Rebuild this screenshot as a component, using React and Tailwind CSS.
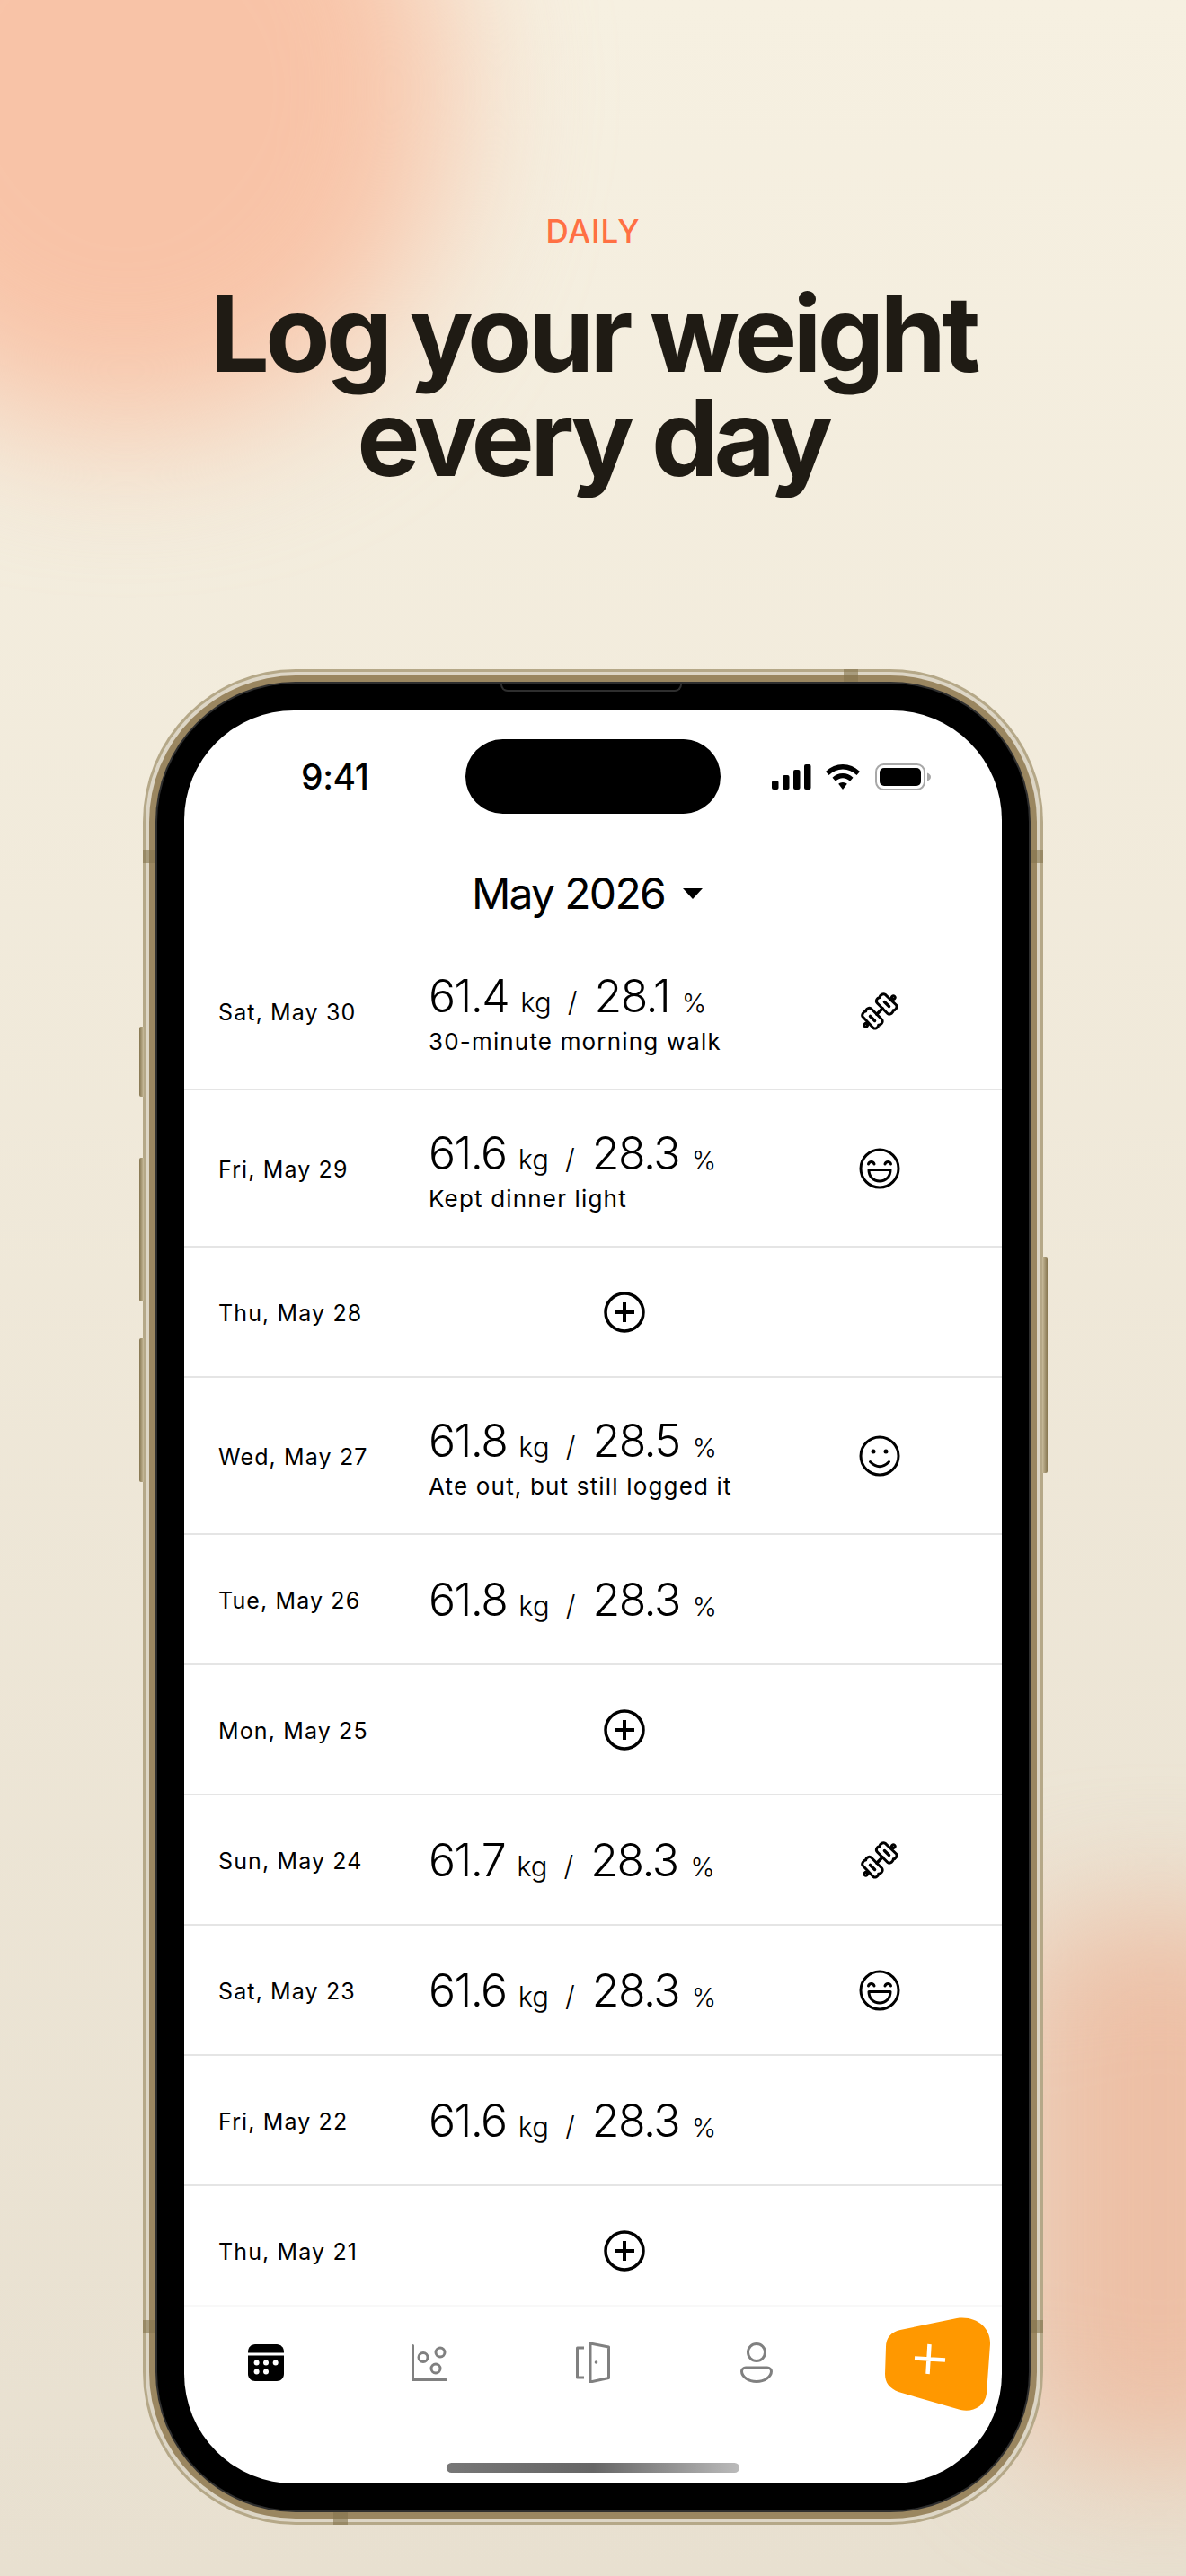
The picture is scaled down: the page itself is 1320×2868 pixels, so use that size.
const rows = [
  { date: 'Sat, May 30', kg: '61.4', pct: '28.1', note: '30-minute morning walk', icon: 'dumbbell' },
  { date: 'Fri, May 29', kg: '61.6', pct: '28.3', note: 'Kept dinner light', icon: 'laugh' },
  { date: 'Thu, May 28' },
  { date: 'Wed, May 27', kg: '61.8', pct: '28.5', note: 'Ate out, but still logged it', icon: 'smile' },
  { date: 'Tue, May 26', kg: '61.8', pct: '28.3' },
  { date: 'Mon, May 25' },
  { date: 'Sun, May 24', kg: '61.7', pct: '28.3', icon: 'dumbbell' },
  { date: 'Sat, May 23', kg: '61.6', pct: '28.3', icon: 'laugh' },
  { date: 'Fri, May 22', kg: '61.6', pct: '28.3' },
  { date: 'Thu, May 21' },
];

const DumbbellIcon = () => (
  <svg width="46" height="46" viewBox="-25.500 -25.500 51 51" fill="none" stroke="#000" strokeWidth="3.3" strokeLinecap="round" strokeLinejoin="round">
    <g transform="rotate(-45)">
      <path d="M-5 0H5" strokeWidth="3.8" />
      <path d="M5 -9C5 -13 10 -14 12 -12C14 -14 19 -13 19.500 -10L20 9C19.500 12 15 13 13 11C11 13 6 13 5 9Z" />
      <path d="M-5 -9C-5 -13 -10 -14 -12 -12C-14 -14 -19 -13 -19.500 -10L-20 9C-19.500 12 -15 13 -13 11C-11 13 -6 13 -5 9Z" />
      <path d="M12.500 -4V4M-12.500 -4V4" strokeWidth="3.8" />
      <circle cx="24" cy="0" r="2" />
      <circle cx="-24" cy="0" r="2" />
    </g>
  </svg>
);

const LaughIcon = () => (
  <svg width="46" height="46" viewBox="0 0 46 46" fill="none" stroke="#000" strokeWidth="3" strokeLinecap="round" strokeLinejoin="round">
    <circle cx="23" cy="23" r="21" />
    <path d="M10.500 18C11.500 14.500 16 14.500 17 18M29 18C30 14.500 34.500 14.500 35.500 18" />
    <path d="M11 24.500H35C35 32 30 37 23 37C16 37 11 32 11 24.500Z" />
  </svg>
);

const SmileIcon = () => (
  <svg width="46" height="46" viewBox="0 0 46 46" fill="none" stroke="#000" strokeWidth="3" strokeLinecap="round">
    <circle cx="23" cy="23" r="21" />
    <circle cx="16" cy="18" r="2.5" fill="#000" stroke="none" />
    <circle cx="30" cy="18" r="2.5" fill="#000" stroke="none" />
    <path d="M12.500 29.500Q23 40 33.500 29.500" />
  </svg>
);

const PlusCircle = () => (
  <svg width="46" height="46" viewBox="0 0 46 46" fill="none" stroke="#000" strokeWidth="3.5">
    <circle cx="23" cy="23" r="21" />
    <path d="M23 12V34M12 23H34" strokeWidth="4" />
  </svg>
);

const rowIcons = { dumbbell: DumbbellIcon, laugh: LaughIcon, smile: SmileIcon };

const LogRow = ({ item }) => {
  const Icon = rowIcons[item.icon];
  const tall = Boolean(item.note);
  return (
    <div className={`flex shrink-0 items-center border-b-2 border-[#e5e5e5] pl-[38px] ${tall ? 'h-[175px]' : 'h-[145px]'}`}>
      <div className="mt-[2px] w-[234px] text-[25px] leading-[32px] tracking-[0.045em] text-black">{item.date}</div>
      <div className="w-[436px]">
        {item.kg ? (
          <div className={`text-black ${tall ? 'pt-[6px]' : ''}`}>
            <div className="flex h-[56px] items-baseline whitespace-nowrap">
              <span className="text-[50px] font-[350] leading-[56px] tracking-[-0.03em]">{item.kg}</span>
              <span className="ml-[13px] text-[31px] font-[350] leading-none">kg</span>
              <span className="ml-[18px] text-[31px] font-[350] leading-none">/</span>
              <span className="ml-[19px] text-[50px] font-[350] leading-[56px] tracking-[-0.03em]">{item.pct}</span>
              <span className="ml-[14px] text-[29px] font-light leading-none">%</span>
            </div>
            {item.note && <div className="mt-[6px] text-[26px] leading-[34px] tracking-[0.045em]">{item.note}</div>}
          </div>
        ) : (
          <div className="flex justify-center">
            <PlusCircle />
          </div>
        )}
      </div>
      <div className="flex w-[132px] justify-center">{Icon && <Icon />}</div>
    </div>
  );
};

const StatusIcons = () => (
  <div className="ml-[57px] flex items-center">
    <svg width="44" height="28" viewBox="0 0 44 28" fill="#000">
      <rect x="0" y="18" width="7.5" height="10" rx="2" />
      <rect x="12" y="12" width="7.5" height="16" rx="2" />
      <rect x="24" y="6" width="7.5" height="22" rx="2" />
      <rect x="36" y="0" width="7.5" height="28" rx="2" />
    </svg>
    <svg className="ml-[16px]" width="38" height="28" viewBox="0 0 38 28" fill="#000">
      <path d="M19 0C26 0 32.500 2.800 38 8L34.500 12C30 7.800 25 5.500 19 5.500C13 5.500 8 7.800 3.500 12L0 8C5.500 2.800 12 0 19 0Z" />
      <path d="M19 10C23.500 10 27.500 11.800 30.500 14.800L27 18.700C24.800 16.500 22 15.300 19 15.300C16 15.300 13.200 16.500 11 18.700L7.500 14.800C10.500 11.800 14.500 10 19 10Z" />
      <path d="M19 20C21 20 22.500 20.700 23.800 21.800L19 28L14.200 21.800C15.500 20.700 17 20 19 20Z" />
    </svg>
    <svg className="ml-[17px]" width="62" height="30" viewBox="0 0 62 30">
      <rect x="1" y="1" width="54" height="28" rx="8.500" fill="none" stroke="#a8a8a8" strokeWidth="2" />
      <rect x="5" y="5" width="46" height="20" rx="5" fill="#000" />
      <path d="M58 10.500C60.500 11.500 62 13 62 15C62 17 60.500 18.500 58 19.500Z" fill="#a8a8a8" />
    </svg>
  </div>
);

const TabBar = () => (
  <div className="flex h-[199px] shrink-0 flex-col border-t-2 border-[#f8f8f8]">
    <div className="grid grid-cols-5 items-start pt-[42px]">
      <div className="flex justify-center">
        <svg width="40" height="41" viewBox="0 0 40 41">
          <path d="M8 0H32C36.500 0 40 3.500 40 8.500V9.500H0V8.500C0 3.500 3.500 0 8 0Z" fill="#000" />
          <path d="M0 12.500H40V33C40 37.500 36.500 41 32 41H8C3.500 41 0 37.500 0 33Z" fill="#000" />
          <g fill="#fff">
            <circle cx="9.600" cy="20.500" r="3" />
            <circle cx="20" cy="20.500" r="3" />
            <circle cx="30.700" cy="20.500" r="3" />
            <circle cx="9.600" cy="30.500" r="3" />
            <circle cx="20" cy="30.500" r="3" />
          </g>
        </svg>
      </div>
      <div className="flex justify-center">
        <svg width="40" height="41" viewBox="0 0 40 41" fill="none" stroke="#808080" strokeWidth="3" strokeLinecap="round" strokeLinejoin="round">
          <path d="M1.500 1.500V39.500H38.500" />
          <circle cx="13" cy="14.500" r="5" />
          <circle cx="32" cy="9" r="5" />
          <circle cx="27" cy="27" r="5" />
        </svg>
      </div>
      <div className="flex justify-center">
        <svg className="-mt-[2px]" width="38" height="45" viewBox="0 0 38 45" fill="none" stroke="#808080" strokeWidth="3" strokeLinejoin="round">
          <path d="M9 6H1.500V39H9" />
          <path d="M16 1L36.500 5V39.500L16 44Z" />
          <circle cx="22.500" cy="22" r="1.800" fill="#808080" stroke="none" />
        </svg>
      </div>
      <div className="flex justify-center">
        <svg className="-mt-[2px]" width="36" height="45" viewBox="0 0 36 45" fill="none" stroke="#808080" strokeWidth="3">
          <circle cx="18" cy="11" r="9.500" />
          <path d="M6 28H30C32.500 28 34.500 30 34.500 32C34.500 38 27 43.500 18 43.500C9 43.500 1.500 38 1.500 32C1.500 30 3.500 28 6 28Z" />
        </svg>
      </div>
      <div className="-mt-[30px] pl-[52px]">
        <svg width="118" height="104" viewBox="0 0 118 104">
          <path d="M17 14L80 1C102 -2 118 12 117 30L113 85C111 100 97 106 84 103L15 83C5 79 0 73 0 63L1 33C1 23 7 16 17 14Z" fill="#ff9800" />
          <path d="M33 45.500L67 47.500M49.500 30L47.500 63" stroke="#fff" strokeWidth="4.500" fill="none" />
        </svg>
      </div>
    </div>
    <div className="mx-auto mt-auto mb-[12px] h-[11px] w-[326px] rounded-full bg-gradient-to-r from-[#777] via-[#666] to-[#bbb]" />
  </div>
);

const PhoneEdge = ({ side }) => {
  const spots = {
    leftTop: 'left-0 top-[201px] h-[15px] w-[14px]',
    rightTop: 'right-0 top-[201px] h-[15px] w-[14px]',
    leftBottom: 'left-0 top-[1838px] h-[15px] w-[14px]',
    rightBottom: 'right-0 top-[1838px] h-[15px] w-[14px]',
    top: 'left-[780px] top-0 h-[14px] w-[16px]',
    bottom: 'left-[212px] bottom-0 h-[14px] w-[16px]',
  };
  return <div className={`absolute bg-[#85754f]/60 ${spots[side]}`} />;
};

const App = () => {
  return (
    <div className="relative h-[2868px] w-[1320px] overflow-hidden bg-gradient-to-b from-[#f6f0e1] to-[#e8e0d0] font-[Inter,sans-serif]">
      {/* soft colour blobs */}
      <div className="absolute -left-[220px] -top-[280px] h-[760px] w-[720px] rounded-full bg-[#f8c3a7] blur-[80px]" />
      <div className="absolute left-[1130px] top-[2130px] h-[610px] w-[320px] rounded-[100px] bg-[#edbfa5] blur-[70px]" />

      <div className="relative flex flex-col items-center pt-[237px]">
        <div className="text-[35px] font-medium leading-[40px] tracking-[0.025em] text-[#ff7043]">DAILY</div>
        <h1 className="mt-[36px] text-center text-[118px] font-bold leading-[116px] tracking-[-0.04em] text-[#1f1b14]">
          Log your weight
          <br />
          every day
        </h1>

        {/* phone */}
        <div className="relative mt-[200px]">
          <div className="absolute -left-[4px] top-[398px] h-[78px] w-[5px] rounded-l-[2px] bg-gradient-to-r from-[#85754f] to-[#c9bc9c]" />
          <div className="absolute -left-[4px] top-[544px] h-[160px] w-[5px] rounded-l-[2px] bg-gradient-to-r from-[#85754f] to-[#c9bc9c]" />
          <div className="absolute -left-[4px] top-[745px] h-[160px] w-[5px] rounded-l-[2px] bg-gradient-to-r from-[#85754f] to-[#c9bc9c]" />
          <div className="absolute -right-[5px] top-[655px] h-[240px] w-[6px] rounded-r-[2px] bg-gradient-to-l from-[#85754f] to-[#c9bc9c]" />

          <div className="rounded-[170px] bg-[#b5a888] p-[3px]">
            <div className="rounded-[167px] bg-[#ddd6c6] p-[4px]">
              <div className="rounded-[163px] bg-[#9a8660] p-[7px]">
                <div className="rounded-[156px] bg-[#2e2e2e] p-[2px]">
                  <div className="relative rounded-[154px] bg-black p-[30px]">
                    <div className="absolute left-[382px] top-0 h-[9px] w-[202px] rounded-b-[8px] border-x-2 border-b-2 border-[#2e2e2e]" />
                    <div className="flex h-[1974px] w-[910px] flex-col overflow-hidden rounded-[122px] bg-white text-black">
                      <div className="flex shrink-0 items-center pt-[32px]">
                        <div className="w-[313px] pl-[130px] text-[39px] font-medium leading-none tracking-[-0.01em]">9:41</div>
                        <div className="h-[83px] w-[284px] rounded-full bg-black" />
                        <StatusIcons />
                      </div>
                      <div className="flex h-[133px] shrink-0 justify-center pr-[13px] pt-[62px]">
                        <div className="flex h-[54px] items-center">
                          <span className="text-[48px] leading-[54px] tracking-[-0.035em]">May 2026</span>
                          <svg className="ml-[20px]" width="22" height="12" viewBox="0 0 22 12" fill="#000">
                            <path d="M0 0H22L11 12Z" />
                          </svg>
                        </div>
                      </div>
                      <div className="flex min-h-0 flex-1 flex-col overflow-hidden">
                        {rows.map((item) => (
                          <LogRow key={item.date} item={item} />
                        ))}
                      </div>
                      <TabBar />
                    </div>
                  </div>
                </div>
              </div>
            </div>
          </div>
          <PhoneEdge side="leftTop" />
          <PhoneEdge side="rightTop" />
          <PhoneEdge side="leftBottom" />
          <PhoneEdge side="rightBottom" />
          <PhoneEdge side="top" />
          <PhoneEdge side="bottom" />
        </div>
      </div>
    </div>
  );
};

export default App;
